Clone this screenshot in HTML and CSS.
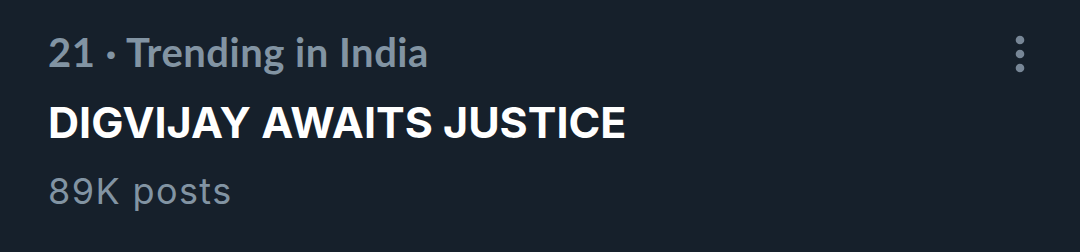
FILE: index.html
```html
<!DOCTYPE html>
<html>
<head>
<meta charset="utf-8">
<link rel="stylesheet" href="styles.css">
</head>
<body>
<div class="trend">
  <div class="body">
    <div class="meta">21 · Trending in India</div>
    <div class="title">DIGVIJAY AWAITS JUSTICE</div>
    <div class="count">89K posts</div>
  </div>
  <button class="more" aria-label="More">
    <svg width="10" height="38" viewBox="0 0 10 38"><circle cx="5" cy="5" r="4.3" fill="#778696"/><circle cx="5" cy="19" r="4.3" fill="#778696"/><circle cx="5" cy="33" r="4.3" fill="#778696"/></svg>
  </button>
</div>
</body>
</html>
```
FILE: styles.css
```css
html, body { margin: 0; padding: 0; }
body { background: #16202b; width: 1080px; height: 252px; overflow: hidden; }
.trend { display: flex; justify-content: space-between; padding: 0 55px 0 48px; }
.body { display: flex; flex-direction: column; }
.meta { font-family: Lato, sans-serif; font-weight: 700; font-size: 40px; letter-spacing: 0.5px; color: #8294a3; line-height: 1; margin-top: 32px; }
.title { font-family: Inter, sans-serif; font-weight: 700; font-size: 43px; color: #ffffff; line-height: 1; margin-top: 29px; }
.count { font-family: Inter, sans-serif; font-weight: 400; font-size: 36px; letter-spacing: 1.4px; color: #8294a3; line-height: 1; margin-top: 29px; }
.more { background: none; border: 0; padding: 0; margin-top: 35px; height: 38px; display: flex; }
```
